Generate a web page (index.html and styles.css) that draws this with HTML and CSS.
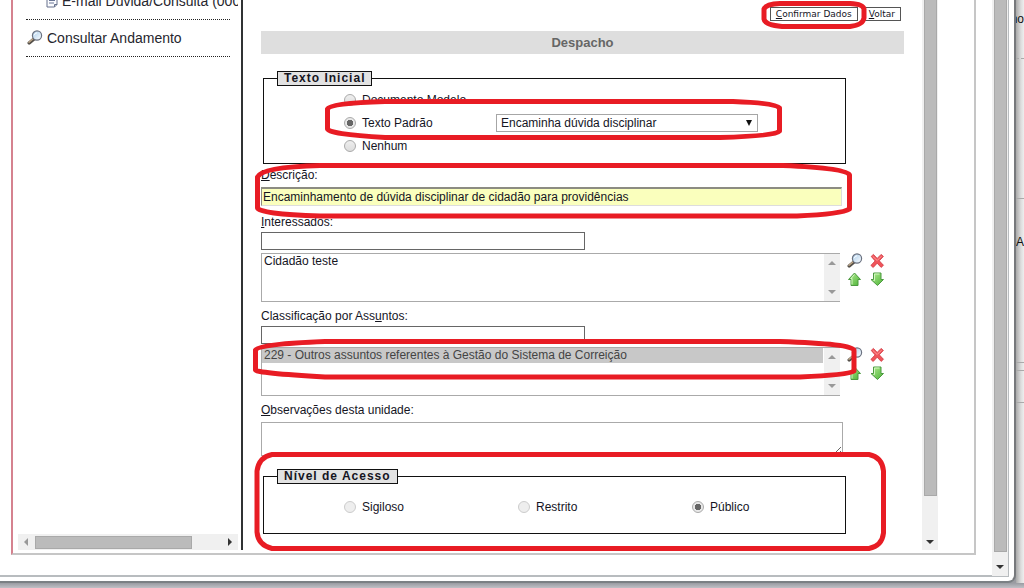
FILE: index.html
```html
<!DOCTYPE html>
<html lang="pt-BR">
<head>
<meta charset="utf-8">
<title>Despacho</title>
<link rel="stylesheet" href="styles.css">
</head>
<body>
<svg class="symbols" aria-hidden="true">
  <defs>
    <linearGradient id="leaf" x1="0" y1="0" x2="1" y2="1"><stop offset="0" stop-color="#b4ee94"/><stop offset="1" stop-color="#4ab034"/></linearGradient>
    <linearGradient id="glass" x1="0" y1="0" x2="1" y2="1"><stop offset="0" stop-color="#a9cdec"/><stop offset="1" stop-color="#fdfeff"/></linearGradient>
    <symbol id="lens" viewBox="0 0 16 16">
      <path d="M7 9 2.200 13" stroke="#55504a" stroke-width="3.400" stroke-linecap="round"/>
      <path d="M5.800 9 2 12.200" stroke="#c0a888" stroke-width="1.400" stroke-linecap="round"/>
      <circle cx="10" cy="5.500" r="4.600" fill="url(#glass)" stroke="#6b7280" stroke-width="1.200"/>
      <path d="M7.300 5.200a3 3 0 0 1 2.800-2.400" fill="none" stroke="#fff"/>
    </symbol>
    <symbol id="cross" viewBox="0 0 16 16">
      <path d="M1.200 3.400 3.400 1.400 7.200 5.400l3.900-4 2.300 2L9.300 7.800l4.200 4.500-2.400 2.100L7.200 10.200l-4 4.300L.900 12.400 5.100 7.900Z" fill="#f0545a" stroke="#cf3a42" stroke-width=".8"/>
      <path d="M2.700 3.300 7.200 7.500l4.300-4.300" fill="none" stroke="#ff9a9a"/>
    </symbol>
    <symbol id="up" viewBox="0 0 16 16">
      <path d="M7.500 1 13.500 7.500h-2.500v6H4V7.500H1.500Z" fill="url(#leaf)" stroke="#4c9a40" stroke-width="1"/>
      <path d="M5 12.500V6.500H4l3.500-4" fill="none" stroke="#d3f6c1"/>
    </symbol>
    <symbol id="down" viewBox="0 0 16 16">
      <path d="M7.500 13.500 1 7.500h2.500V1h7.500v6.500h2.500Z" fill="url(#leaf)" stroke="#4c9a40" stroke-width="1"/>
      <path d="M3.500 8.500h1V2h5" fill="none" stroke="#d3f6c1"/>
    </symbol>
  </defs>
</svg>

<div class="desktop">
  <div class="window">
    <div class="frame">
      <nav class="sidebar">
        <div class="menu">
          <a class="item sub" href="#email">
            <svg width="12" height="14" viewBox="0 0 12 14"><path d="M1 1h10v9.500L8.500 13H1Z" fill="#fbfcff" stroke="#66718c"/><path d="M3 4h6M3 6.500h6M3 9h5" stroke="#6a7696"/><path d="M8.500 13v-2.500H11" fill="none" stroke="#66718c"/></svg>
            <span>E-mail Dúvida/Consulta (000</span>
          </a>
          <a class="item" href="#andamento">
            <svg width="16" height="16"><use href="#lens"/></svg>
            <span>Consultar Andamento</span>
          </a>
        </div>
        <div class="hscroll" aria-hidden="true"><i class="tri left"></i><b class="hthumb"></b><i class="tri right"></i></div>
      </nav>

      <main class="main">
        <form class="form">
          <div class="actions">
            <button class="btn" type="button"><u>C</u>onfirmar Dados</button>
            <button class="btn" type="button"><u>V</u>oltar</button>
          </div>
          <h1 class="title">Despacho</h1>

          <fieldset class="group initial">
            <legend class="legend">Texto Inicial</legend>
            <div class="choices">
              <label class="choice"><input class="radio" type="radio" name="texto">Documento Modelo</label>
              <div class="pair">
                <label class="choice"><input class="radio" type="radio" name="texto" checked>Texto Padrão</label>
                <div class="picker">
                  <select class="drop" aria-label="Texto Padrão"><option>Encaminha dúvida disciplinar</option></select>
                  <i class="tri drop-mark"></i>
                </div>
              </div>
              <label class="choice"><input class="radio" type="radio" name="texto">Nenhum</label>
            </div>
          </fieldset>

          <div class="field wide">
            <label class="label" for="desc"><u>D</u>escrição:</label>
            <input class="desc" id="desc" type="text" value="Encaminhamento de dúvida disciplinar de cidadão para providências">
          </div>

          <div class="field lookup people">
            <label class="label" for="inter"><u>I</u>nteressados:</label>
            <input class="short" id="inter" type="text">
            <div class="listrow">
              <div class="listbox">
                <select class="list" size="3" aria-label="Interessados selecionados"><option>Cidadão teste</option></select>
                <div class="lscroll" aria-hidden="true"><i class="tri top"></i><i class="tri bottom"></i></div>
              </div>
              <div class="tools">
                <button class="tool" type="button" aria-label="Pesquisar"><svg width="16" height="16"><use href="#lens"/></svg></button>
                <button class="tool" type="button" aria-label="Remover"><svg width="16" height="16"><use href="#cross"/></svg></button>
                <button class="tool" type="button" aria-label="Acima"><svg width="16" height="16"><use href="#up"/></svg></button>
                <button class="tool" type="button" aria-label="Abaixo"><svg width="16" height="16"><use href="#down"/></svg></button>
              </div>
            </div>
          </div>

          <div class="field lookup">
            <label class="label" for="assunto">Classificação por Ass<u>u</u>ntos:</label>
            <input class="short" id="assunto" type="text">
            <div class="listrow">
              <div class="listbox">
                <select class="list" size="3" aria-label="Assuntos selecionados"><option selected>229 - Outros assuntos referentes à Gestão do Sistema de Correição</option></select>
                <div class="lscroll" aria-hidden="true"><i class="tri top"></i><i class="tri bottom"></i></div>
              </div>
              <div class="tools">
                <button class="tool" type="button" aria-label="Pesquisar"><svg width="16" height="16"><use href="#lens"/></svg></button>
                <button class="tool" type="button" aria-label="Remover"><svg width="16" height="16"><use href="#cross"/></svg></button>
                <button class="tool" type="button" aria-label="Acima"><svg width="16" height="16"><use href="#up"/></svg></button>
                <button class="tool" type="button" aria-label="Abaixo"><svg width="16" height="16"><use href="#down"/></svg></button>
              </div>
            </div>
          </div>

          <div class="field wide">
            <label class="label" for="obs"><u>O</u>bservações desta unidade:</label>
            <textarea class="notes" id="obs" rows="2"></textarea>
          </div>

          <fieldset class="group access">
            <legend class="legend">Nível de Acesso</legend>
            <div class="levels">
              <label class="choice"><input class="radio" type="radio" name="nivel" disabled>Sigiloso</label>
              <label class="choice"><input class="radio" type="radio" name="nivel" disabled>Restrito</label>
              <label class="choice"><input class="radio" type="radio" name="nivel" checked>Público</label>
            </div>
          </fieldset>
        </form>
        <div class="vscroll inner" aria-hidden="true"><b class="vthumb"></b><i class="tri bottom dark"></i></div>
      </main>
    </div>
    <div class="vscroll outer" aria-hidden="true"><b class="vthumb"></b><i class="tri bottom dark"></i></div>
  </div>

  <aside class="behind">
    <div class="cell first">no</div>
    <div class="cell second"></div>
    <div class="cell third">A</div>
    <div class="cell tab"></div>
  </aside>
</div>

<svg class="marks" width="1024" height="588" viewBox="0 0 1024 588" fill="none" stroke="#e81c24" stroke-width="5" stroke-linejoin="round" aria-hidden="true">
  <path d="M780 3.500H850Q863 4 864 9V18Q863 25 850 26.500H782Q765 25 764 19V9Q766 4 780 3.500Z"/>
  <path d="M385 101.500H733Q776 103 779.500 108V131Q776 136 720 137.500H385Q328 134 327.500 129V109Q330 103 385 101.500Z"/>
  <path d="M320 165.500H783Q847 168 849.500 175V209Q842 214 797 216H320Q259 214 257.500 208V177Q262 167 320 165.500Z"/>
  <path d="M325 341.500H780Q853 344 854 350V371Q848 375 800 377H325Q256 373 255.500 370V350Q258 344 325 341.500Z"/>
  <path d="M272 454.500H869Q882 457 883.500 471V533Q882 546 869 548.500H272Q258 545 257 532V471Q259 457 272 454.500Z"/>
</svg>
</body>
</html>
```

FILE: styles.css
```css
* { box-sizing: border-box; }

body {
  margin: 0;
  min-height: 100vh;
  background: #b5b6bc;
  color: #15151f;
  font: 12px/14px "Liberation Sans", Arial, sans-serif;
}

input, select, textarea, button { margin: 0; color: inherit; font: inherit; }
svg { display: block; flex: none; }
.symbols { position: absolute; width: 0; height: 0; }
.marks { position: absolute; top: 0; left: 0; pointer-events: none; }

.desktop {
  display: flex;
  height: 100vh;
  padding-bottom: 5px;
  overflow: hidden;
  background: linear-gradient(to top, #c0c0c6, #999ba1 5px);
}

.window {
  display: flex;
  flex: 1;
  min-width: 0;
  padding-right: 6px;
  padding-bottom: 5px;
  border-right: 2px solid #77797c;
  border-bottom: 2px solid #7b8084;
  border-radius: 0 0 8px 0;
  background: linear-gradient(#b8bcbf, #b8bcbf) left bottom 4px / calc(100% - 5px) 2px no-repeat,
    linear-gradient(#b8bcbf, #b8bcbf) right 5px top / 1px calc(100% - 5px) no-repeat, #fff;
}

.frame {
  display: flex;
  flex: 1;
  min-width: 0;
  margin: 0 16px 21px 11px;
  border: solid #c6c6c6;
  border-width: 0 2px 2px 2px;
  border-left-color: #d5828f;
}

.sidebar {
  display: flex;
  flex: none;
  flex-direction: column;
  justify-content: space-between;
  width: 230px;
  margin-bottom: 3px;
  padding: 0 3px 0 5px;
  border-right: 2px solid #303334;
  overflow: hidden;
}

.menu { margin-top: -17px; padding-left: 8px; overflow: hidden; }
.item {
  display: flex;
  gap: 4px;
  align-items: center;
  height: 37px;
  margin-right: 8px;
  padding-left: 1px;
  border-bottom: 1px dotted #222;
  color: #26262e;
  font-size: 14px;
  line-height: 18px;
  white-space: nowrap;
  text-decoration: none;
}
.sub { padding-left: 20px; }

.tri { width: 0; height: 0; border: 4px solid transparent; }
.left { border-right-color: #999; border-left-width: 0; }
.right { border-left-color: #333; border-right-width: 0; }
.top { border-bottom-color: #999; border-top-width: 0; }
.bottom { border-top-color: #999; border-bottom-width: 0; }
.dark { border-top-color: #333; }

.hscroll { display: flex; align-items: center; height: 16px; padding: 0 6px; background: #f0f0f0; }
.hthumb { width: 157px; height: 13px; margin: 0 auto 0 7px; border: 1px solid #a9a9a9; background: #bbb; }

.main { display: flex; flex: 1; min-width: 0; margin: 0 36px 3px 0; }
.form { flex: 1; min-width: 0; padding: 7px 18px 0; }

.vscroll { display: flex; flex: none; flex-direction: column; align-items: center; width: 16px; background: #f0f0f0; }
.vthumb { flex: 1; width: 13px; border: 1px solid #a9a9a9; border-top: 0; background: #bbb; }
.inner .tri { margin: 44px 0 6px; }
.outer .tri { margin: 13px 0 7px; }

.actions { display: flex; justify-content: flex-end; gap: 5px; padding-right: 3px; }
.btn {
  height: 14px;
  padding: 0 5px;
  border: 1px solid #555;
  background: #fff;
  font: 9px/11px "DejaVu Sans", Verdana, sans-serif;
}

.title {
  margin: 10px 0 17px;
  background: #dedede;
  color: #666;
  font-size: 13px;
  line-height: 23px;
  text-align: center;
}

.group { width: 583px; max-width: 100%; margin: 0 0 0 2px; padding: 0; border: 1px solid #111; }
.legend {
  margin-left: 13px;
  padding: 0 6px;
  border: 1px solid #111;
  background: #e2e2e2;
  line-height: 13px;
  font-weight: bold;
  letter-spacing: 1px;
}
.choices { padding: 2px 0 6px 80px; }
.pair { display: grid; grid-template-columns: 152px 262px; }
.choice { display: flex; align-items: center; gap: 6px; height: 23px; }
.radio {
  width: 12px;
  height: 12px;
  border: 1px solid #aaa;
  border-radius: 50%;
  background: linear-gradient(#eee, #ddd);
  appearance: none;
}
.radio:checked { background: radial-gradient(circle, #666 0 3px, #e8e8e8 3px); }
.radio:disabled { border-color: #ccc; background: #eee; }

.picker { display: grid; align-items: center; }
.drop {
  grid-area: 1 / 1;
  height: 18px;
  padding: 0 4px;
  border: 1px solid #a6a6a6;
  border-radius: 0;
  background: #fff;
  appearance: none;
}
.drop-mark { grid-area: 1 / 1; justify-self: end; margin-right: 6px; border-width: 6px 3px 0; border-top-color: #111; pointer-events: none; }

.field { display: flex; flex-direction: column; align-items: flex-start; }
.wide { gap: 5px; margin-top: 4px; }
.lookup { gap: 3px; margin-top: 7px; }
.people { margin-top: 9px; }
.desc {
  width: 581px;
  max-width: 100%;
  height: 19px;
  padding: 0 1px 1px;
  border: 1px solid #ddd;
  border-top: 2px solid #8c8c82;
  border-left: 1px solid #8c8c82;
  background: #faffbd;
}
.short { width: 324px; max-width: 100%; height: 18px; border: 1px solid #666; background: #fff; }
.listrow { display: flex; gap: 7px; align-self: stretch; }
.listbox { display: flex; width: 579px; border: solid #aaa; border-width: 1px 0 1px 1px; }
.list { flex: 1; min-width: 0; height: 47px; padding: 0 1px 0 0; border: 0; background: #fff; overflow: hidden; appearance: none; outline: 0; }
.list option { min-height: 15px; padding: 0 2px; line-height: 15px; }
.list option:checked { background: #c8c8c8 linear-gradient(#c8c8c8, #c8c8c8); color: #444; }
.lscroll { display: flex; flex: none; flex-direction: column; justify-content: space-between; align-items: center; width: 16px; padding: 7px 0; background: #f0f0f0; }
.tools { display: grid; grid-template-columns: 16px 16px; gap: 3px 7px; align-content: start; }
.tool { padding: 0; border: 0; background: none; }
.lookup + .wide { margin-top: 7px; }
.notes { width: 582px; max-width: 100%; height: 34px; border: 1px solid #aaa; background: #fff; }
.access { margin-top: 13px; }
.levels { display: grid; grid-template-columns: repeat(3, 1fr); padding: 11px 0 15px 80px; margin-right: -21px; }

.behind { width: 8px; overflow: hidden; background: linear-gradient(to right, #aaa, #ddd 5px, #eee); color: #111; }
.cell { border-bottom: 1px solid #aaa; }
.first { height: 59px; padding-top: 12px; border-bottom-style: dashed; direction: rtl; }
.second { height: 140px; }
.third { height: 164px; padding-top: 36px; }
.tab { height: 33px; margin-top: 7px; border: solid #aaa; border-width: 1px 0; }
```
